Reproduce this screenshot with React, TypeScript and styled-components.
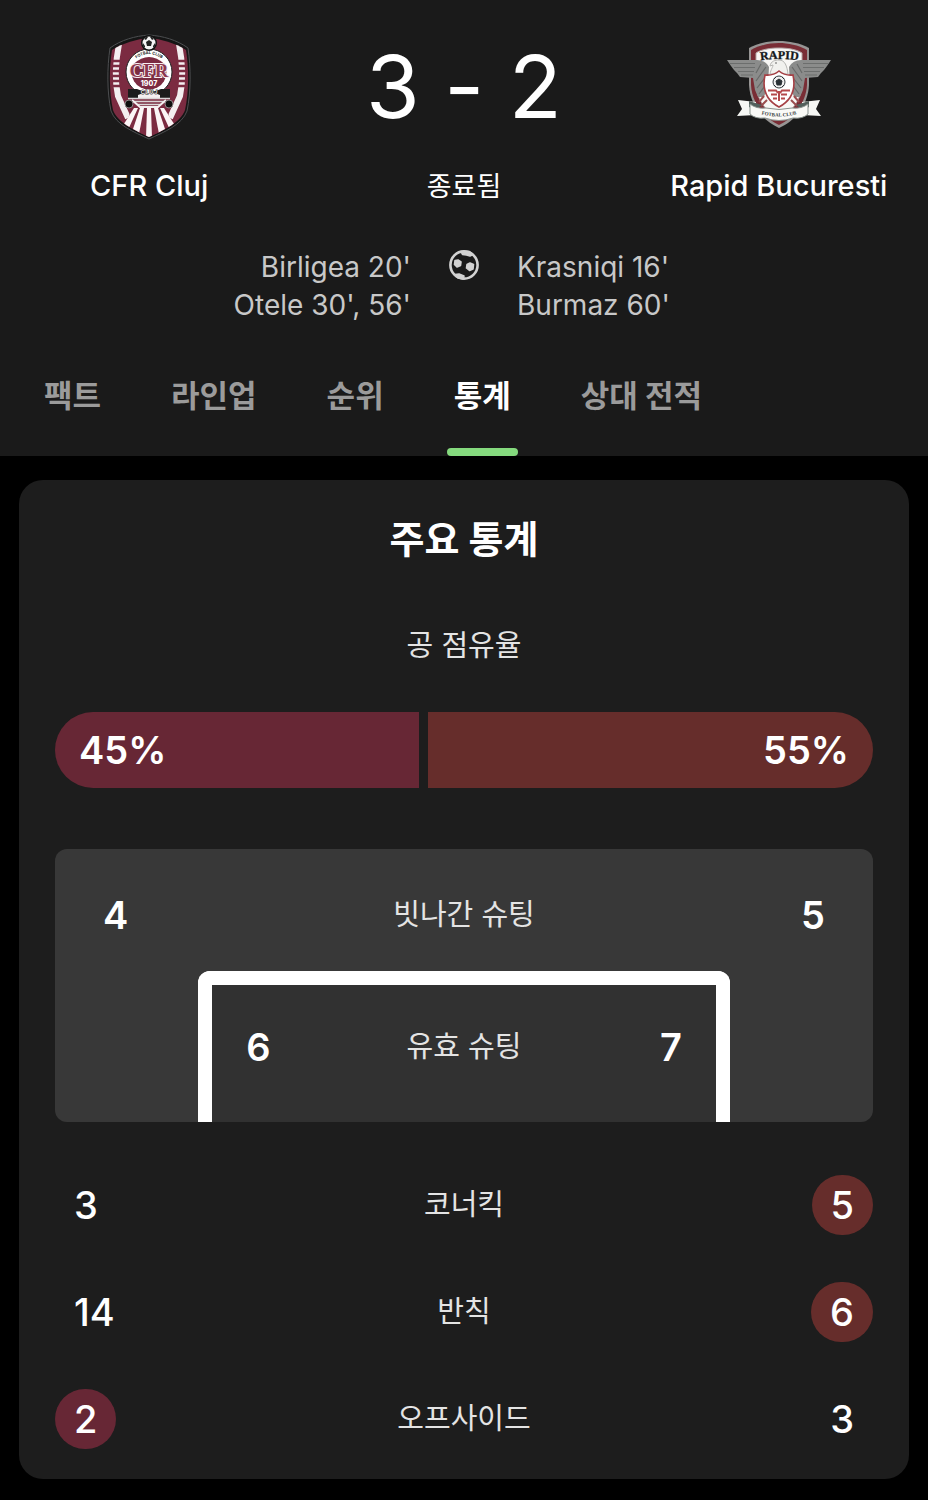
import React from "react";
import styled, { createGlobalStyle } from "styled-components";

const HOME = "#672735";
const AWAY = "#662d2b";

const GlobalStyle = createGlobalStyle`
  *, *::before, *::after { box-sizing: border-box; }
  body {
    margin: 0;
    background: #000;
    color: #fff;
    font-family: Inter, "Noto Sans CJK KR", sans-serif;
    font-size: 28px;
    line-height: 38px;
  }
`;

const Header = styled.header`
  background: #1a1a1a;
  padding-top: 34px;
`;

const Scoreboard = styled.section`
  display: grid;
  grid-template-columns: 9fr 10fr 9fr;
`;

const Team = styled.div`
  display: flex;
  flex-direction: column;
  align-items: center;
`;

const Emblem = styled.div`
  height: 105px;
  display: flex;
  align-items: center;
  justify-content: center;
`;

const TeamName = styled.h2`
  margin: 28px 0 0;
  font-size: 29px;
  line-height: 38px;
  font-weight: 500;
  white-space: nowrap;
`;

const Score = styled.div`
  height: 105px;
  font-size: 87px;
  line-height: 105px;
  font-feature-settings: "calt" 0;
  white-space: nowrap;
`;

const Status = styled.p`
  margin: 28px 0 0;
  font-size: 27px;
  line-height: 40px;
`;

const Scorers = styled.section`
  display: grid;
  grid-template-columns: 1fr 30px 1fr;
  column-gap: 38px;
  margin-top: 41px;
  color: #c8c8c8;
`;

const ScorerList = styled.ul<{ $side: "home" | "away" }>`
  margin: 0;
  padding: 0;
  list-style: none;
  text-align: ${(p) => (p.$side === "home" ? "right" : "left")};
`;

const BallIcon = styled.svg`
  width: 30px;
  height: 38px;
`;

const Tabs = styled.nav`
  display: flex;
  gap: 56px;
  margin-top: 33px;
  padding: 0 37px;
`;

const Tab = styled.button<{ $active?: boolean }>`
  position: relative;
  height: 99px;
  padding: 0 7px 22px;
  border: 0;
  background: none;
  color: ${(p) => (p.$active ? "#fff" : "#9b9b9b")};
  font: inherit;
  font-size: 31px;
  font-weight: 700;
  white-space: nowrap;

  &::after {
    content: "";
    display: ${(p) => (p.$active ? "block" : "none")};
    position: absolute;
    left: 0;
    right: 0;
    bottom: 0;
    height: 8px;
    border-radius: 4px;
    background: #85da7e;
  }
`;

const Card = styled.main`
  margin: 24px 19px 21px;
  padding: 35px 36px 30px;
  border-radius: 24px;
  background: #1d1d1d;
`;

const Title = styled.h1`
  margin: 0;
  font-size: 38px;
  line-height: 48px;
  font-weight: 700;
  text-align: center;
`;

const Label = styled.span`
  color: #e4e4e4;
  font-size: 29px;
  line-height: 40px;
  text-align: center;
`;

const Possession = styled.section`
  display: flex;
  flex-direction: column;
  gap: 46px;
  margin-top: 63px;
`;

const PossessionBar = styled.div`
  display: grid;
  gap: 9px;
  border-radius: 38px;
  overflow: hidden;
`;

const Share = styled.div<{ $side: "home" | "away" }>`
  height: 76px;
  padding: 0 24px;
  background: ${(p) => (p.$side === "home" ? HOME : AWAY)};
  font-size: 38px;
  line-height: 76px;
  font-weight: 600;
  text-align: ${(p) => (p.$side === "home" ? "left" : "right")};
`;

const Shots = styled.section`
  margin-top: 61px;
  padding-top: 36px;
  border-radius: 12px;
  background: #383838;
`;

const StatRow = styled.div`
  display: grid;
  grid-template-columns: 1fr auto 1fr;
  align-items: center;
`;

const ShotRow = styled(StatRow)<{ $inset: number }>`
  padding: 0 ${(p) => p.$inset}px;
`;

const Goal = styled.div`
  width: 65%;
  height: 151px;
  margin: 26px auto 0;
  padding-top: 32px;
  border: 14px solid #fff;
  border-bottom: 0;
  border-radius: 12px 12px 0 0;
  background: #313131;
`;

const Value = styled.span<{ $side: "home" | "away" }>`
  justify-self: ${(p) => (p.$side === "home" ? "start" : "end")};
  height: 60px;
  padding: 0 19px;
  border-radius: 30px;
  font-size: 38px;
  line-height: 60px;
  font-weight: 600;
`;

const ListValue = styled(Value)<{ $best: boolean }>`
  background: ${(p) =>
    !p.$best ? "transparent" : p.$side === "home" ? HOME : AWAY};
  font-weight: 500;
`;

const StatList = styled.section`
  display: flex;
  flex-direction: column;
  gap: 47px;
  margin-top: 53px;
`;

const possession = { home: 45, away: 55 };

const tabs = ["팩트", "라인업", "순위", "통계", "상대 전적"];

const stats = [
  { label: "코너킥", home: 3, away: 5, best: "away" },
  { label: "반칙", home: 14, away: 6, best: "away" },
  { label: "오프사이드", home: 2, away: 3, best: "home" },
];

function CfrCrest() {
  return (
    <svg width="84" height="106" viewBox="0 0 84 106" role="img" aria-label="CFR Cluj">
      <defs>
        <clipPath id="cfr-shield">
          <path d="M42 4C30 5 16 9 5 16C2 34 2 58 6 76C10 88 27 96 42 103C57 96 74 88 78 76C82 58 82 34 79 16C68 9 54 5 42 4Z" />
        </clipPath>
        <path id="cfr-arc" d="M26 27Q42 13 58 27" />
      </defs>
      <path d="M42 1C28 2 14 6 3 14C0 34 0 58 4 77C9 91 27 98 42 105C57 98 75 91 80 77C84 58 84 34 81 14C70 6 56 2 42 1Z" fill="#151515" stroke="#4c4e50" strokeWidth="1" />
      <g clipPath="url(#cfr-shield)">
        <rect width="84" height="106" fill="#7b2b41" />
        <path d="M12 10C8 30 8 48 11 62L21 84" fill="none" stroke="#f4eef0" strokeWidth="6" />
        <path d="M72 10C76 30 76 48 73 62L63 84" fill="none" stroke="#f4eef0" strokeWidth="6" />
        <path d="M4 27H16M4 32H16M4 37H16M4 42H16M4 47H16M4 52H16M68 27H80M68 32H80M68 37H80M68 42H80M68 47H80M68 52H80" stroke="#7b2b41" strokeWidth="2.600" />
        <path d="M25 74H59L71 106H13Z" fill="#7b2b41" />
        <g fill="#fbf5f6">
          <path d="M27 74H31L21 96L15 93Z" />
          <path d="M33 74H37L32 100L25 98Z" />
          <path d="M40 74H44L45 104H39Z" />
          <path d="M47 74H51L59 98L52 100Z" />
          <path d="M53 74H57L69 93L63 96Z" />
        </g>
      </g>
      <circle cx="42" cy="38" r="23" fill="#fff" stroke="#222" strokeWidth="1" />
      <path d="M26.500 30Q42 16 57.500 30A17.500 17.500 0 1 1 26.500 30Z" fill="#7b2b41" />
      <path d="M21 55H30Q42 61 54 55H63V65H21Z" fill="#1c1c1c" />
      <path d="M31 61L42 57L53 61V64H31Z" fill="#f4f0f1" />
      <path d="M21 64.500H63M26 67.500H58M30 70.500H54" stroke="#d9d5d6" strokeWidth="1.400" />
      <path d="M25 66L33 73H51L59 66" fill="none" stroke="#f4f0f1" strokeWidth="2" />
      <circle cx="22" cy="70" r="4" fill="#0e0e0e" stroke="#8d8587" strokeWidth="1" />
      <circle cx="62" cy="70" r="4" fill="#0e0e0e" stroke="#8d8587" strokeWidth="1" />
      <text x="42" y="43" textAnchor="middle" fill="#8c3850" stroke="#f7eff1" strokeWidth="2" paintOrder="stroke" fontFamily="Liberation Serif, serif" fontWeight="700" fontSize="19">CFR</text>
      <text x="42" y="52" textAnchor="middle" fill="#fff" fontFamily="Inter, sans-serif" fontWeight="800" fontSize="7">1907</text>
      <text x="42" y="60" textAnchor="middle" fill="#f4f0f1" stroke="#1c1c1c" strokeWidth="1" paintOrder="stroke" fontFamily="Inter, sans-serif" fontWeight="700" fontSize="5">C L U J</text>
      <text fill="#222" fontFamily="Inter, sans-serif" fontWeight="700" fontSize="4">
        <textPath href="#cfr-arc" startOffset="50%" textAnchor="middle">FOTBAL CLUB</textPath>
      </text>
      <circle cx="42" cy="9" r="8" fill="#111" />
      <circle cx="42" cy="9" r="6.500" fill="#f4f4f4" />
      <path d="M42 6L45 8L44 12H40L39 8ZM37 5L39 3L41 3L39 6ZM47 5L45 3L43 3L45 6ZM36 9L38 12L38 14L36 12ZM48 9L46 12L46 14L48 12Z" fill="#222" />
    </svg>
  );
}

function RapidCrest() {
  const wing = (
    <>
      <path d="M0 20H30Q38 20 42 27L41 45L37 57L31 57L28 50L26 38L13 37L10 33L7 30L4 26Z" fill="#8b8c8b" />
      <path d="M3 23.500H28M7 27.500H28M11 31.500H27M14 35H26" stroke="#6c6e6d" strokeWidth="1" />
      <path d="M34 24L29 33M39 27L29 41M41 34L30 48M40 43L32 54" stroke="#686a69" strokeWidth="1.200" />
    </>
  );
  return (
    <svg width="104" height="94" viewBox="0 0 104 94" role="img" aria-label="Rapid Bucuresti">
      <defs>
        <path id="rapid-arc" d="M30 21Q52 17 75 21" />
        <path id="rapid-ribbon" d="M33 74Q52 79 71 74" />
      </defs>
      <path d="M22 8C31 3 42 1 52 1C62 1 73 3 82 8V45C81 65 68 81 52 88C36 81 23 65 22 45Z" fill="#979594" />
      <path d="M24 10C33 5 43 3 52 3C61 3 71 5 80 10V45C79 63 67 78 52 85C37 78 25 63 24 45Z" fill="#792d35" />
      <path d="M29 13C35 9 44 8 52 8C60 8 69 9 75 13V45C74 60 65 72 52 79C39 72 30 60 29 45Z" fill="#f8f7f5" stroke="#b5a6a5" strokeWidth="1" />
      {wing}
      <g transform="translate(104 0) scale(-1 1)">{wing}</g>
      <path d="M43 34C44 29 46 27 46 25L43 26C44 21 48 20 52 20C58 20 60 26 61 34Z" fill="#f1f1ee" stroke="#b5b5b2" strokeWidth="1" />
      <circle cx="49" cy="23" r="0.800" fill="#555" />
      <path d="M38 35Q46 36 52 31Q58 36 66 35C69 49 65 60 52 67C39 60 35 49 38 35Z" fill="#fff" stroke="#a64045" strokeWidth="1.600" />
      <circle cx="52" cy="42" r="6" fill="#eee" stroke="#343a3e" strokeWidth="1" />
      <path d="M52 39L55 41L54 45H50L49 41ZM47 39L49 37M57 39L55 37M47 45L49 47M57 45L55 47" fill="#293035" stroke="#293035" strokeWidth="1" />
      <path d="M41 50.500H49L51 53M63 50.500H55L53 53M44 54.500H50M60 54.500H54M46 58.500H50M58 58.500H54M52 51V61" fill="none" stroke="#b4484b" strokeWidth="2" />
      <path d="M37 56L32 62M40 60L34 66M67 56L72 62M64 60L70 66" stroke="#9b4d4e" strokeWidth="2" />
      <path d="M11 60L29 62V75L10 76L15 69ZM93 60L75 62V75L94 76L89 69Z" fill="#f6f7f4" />
      <path d="M22 61L35 65L28 70L22 67ZM82 61L69 65L76 70L82 67Z" fill="#52605c" />
      <path d="M23 64Q29 69 39 68Q52 71 65 68Q75 69 81 64V74Q76 79 66 78Q52 83 38 78Q28 79 23 74Z" fill="#fafaf7" stroke="#89928e" strokeWidth="1" />
      <text fill="#15181a" stroke="#15181a" strokeWidth="0.300" fontFamily="Liberation Serif, serif" fontWeight="700" fontSize="12">
        <textPath href="#rapid-arc" startOffset="50%" textAnchor="middle">RAPID</textPath>
      </text>
      <text fill="#38413e" fontFamily="Liberation Serif, serif" fontWeight="700" fontSize="5">
        <textPath href="#rapid-ribbon" startOffset="50%" textAnchor="middle">FOTBAL CLUB</textPath>
      </text>
    </svg>
  );
}

export default function App() {
  return (
    <>
      <GlobalStyle />
      <Header>
        <Scoreboard>
          <Team>
            <Emblem><CfrCrest /></Emblem>
            <TeamName>CFR Cluj</TeamName>
          </Team>
          <Team>
            <Score>3 - 2</Score>
            <Status>종료됨</Status>
          </Team>
          <Team>
            <Emblem><RapidCrest /></Emblem>
            <TeamName>Rapid Bucuresti</TeamName>
          </Team>
        </Scoreboard>
        <Scorers>
          <ScorerList $side="home">
            <li>Birligea 20'</li>
            <li>Otele 30', 56'</li>
          </ScorerList>
          <BallIcon viewBox="0 0 30 38" aria-hidden="true">
            <circle cx="15" cy="17" r="13.600" fill="none" stroke="#d2d2d2" strokeWidth="2.600" />
            <g fill="#d2d2d2" stroke="#d2d2d2" strokeWidth="1.600" strokeLinejoin="round">
              <path d="M9 12L12 14L11.500 17.500L8 19L5.500 16.500L6 12.500Z" />
              <path d="M21 15L24.500 16.500L24 21L20.500 22.500L17.500 20L18 16.500Z" />
              <path d="M12 3.500H20L24 6.500L21 8L17.500 7L13.500 6.500Z" />
              <path d="M6 26.500L10 26L15 28L14 31L9 30Z" />
            </g>
          </BallIcon>
          <ScorerList $side="away">
            <li>Krasniqi 16'</li>
            <li>Burmaz 60'</li>
          </ScorerList>
        </Scorers>
        <Tabs>
          {tabs.map((tab) => (
            <Tab key={tab} type="button" $active={tab === "통계"}>{tab}</Tab>
          ))}
        </Tabs>
      </Header>
      <Card>
        <Title>주요 통계</Title>
        <Possession>
          <Label>공 점유율</Label>
          <PossessionBar
            style={{ gridTemplateColumns: `${possession.home}fr ${possession.away}fr` }}
          >
            <Share $side="home">{possession.home}%</Share>
            <Share $side="away">{possession.away}%</Share>
          </PossessionBar>
        </Possession>
        <Shots>
          <ShotRow $inset={29}>
            <Value $side="home">4</Value>
            <Label>빗나간 슈팅</Label>
            <Value $side="away">5</Value>
          </ShotRow>
          <Goal>
            <ShotRow $inset={15}>
              <Value $side="home">6</Value>
              <Label>유효 슈팅</Label>
              <Value $side="away">7</Value>
            </ShotRow>
          </Goal>
        </Shots>
        <StatList>
          {stats.map((s) => (
            <StatRow key={s.label}>
              <ListValue $side="home" $best={s.best === "home"}>{s.home}</ListValue>
              <Label>{s.label}</Label>
              <ListValue $side="away" $best={s.best === "away"}>{s.away}</ListValue>
            </StatRow>
          ))}
        </StatList>
      </Card>
    </>
  );
}
